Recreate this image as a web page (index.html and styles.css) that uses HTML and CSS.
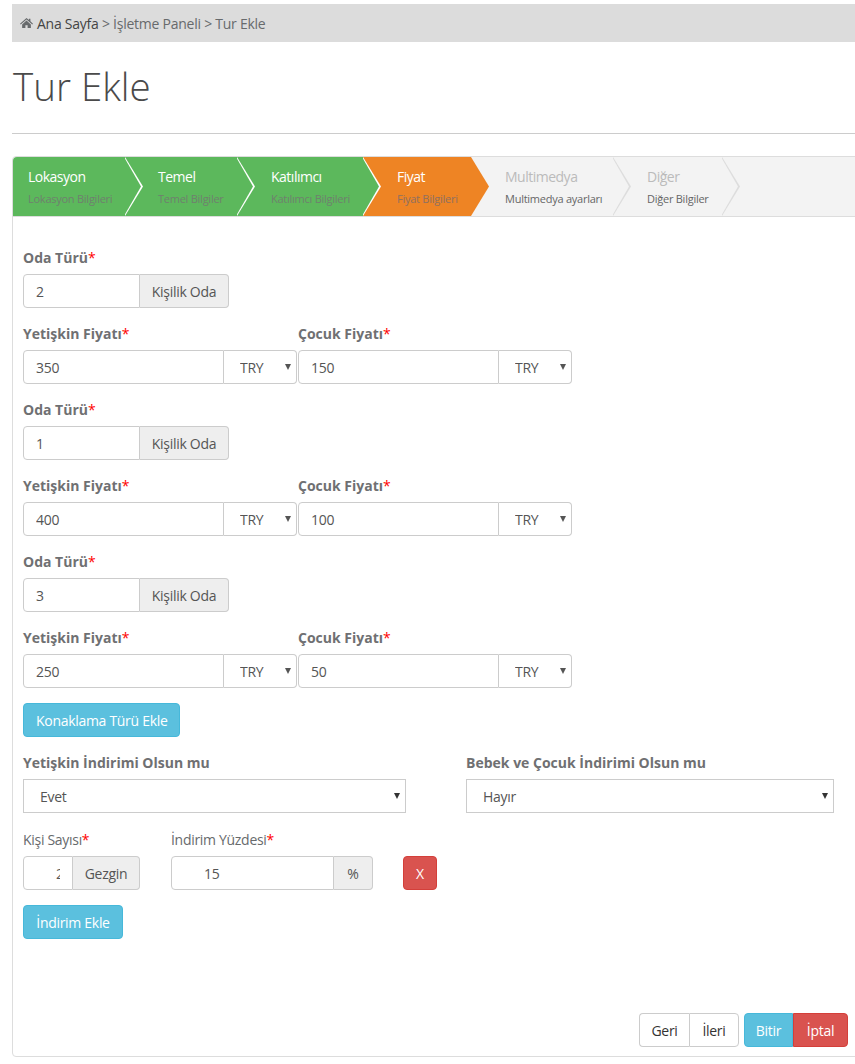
FILE: index.html
```html
<!DOCTYPE html>
<html lang="tr">
<head>
    <meta charset="UTF-8">
    <title>Tur Ekle</title>
    <link rel="stylesheet" href="styles.css">
</head>
<body>
    <div class="breadcrumb">
        <svg class="home-icon" viewBox="0 0 14 12" width="13" height="12"><path d="M7 0.5 L9.6 2.8 V1.4 H11.2 V4.2 L14 6.7 L13.2 7.6 L7 2.2 L0.8 7.6 L0 6.7 Z M2.3 7.5 L7 3.4 L11.7 7.5 V11.5 H8.2 V8.4 H5.8 V11.5 H2.3 Z"/></svg>
        <span class="crumb-trail"><a class="crumb-home">Ana Sayfa</a> &gt; İşletme Paneli &gt; Tur Ekle</span>
    </div>

    <h1 class="page-title">Tur Ekle</h1>
    <hr class="title-rule">

    <div class="wizard">
        <ul class="steps">
            <li class="step done first"><b>Lokasyon</b><small>Lokasyon Bilgileri</small></li>
            <li class="step done second"><b>Temel</b><small>Temel Bilgiler</small></li>
            <li class="step done third"><b>Katılımcı</b><small>Katılımcı Bilgileri</small></li>
            <li class="step active fourth"><b>Fiyat</b><small>Fiyat Bilgileri</small></li>
            <li class="step fifth"><b>Multimedya</b><small>Multimedya ayarları</small></li>
            <li class="step sixth"><b>Diğer</b><small>Diğer Bilgiler</small></li>
        </ul>

        <div class="step-body">
            <label class="field-label">Oda Türü<span class="req">*</span></label>
            <div class="input-group room"><input class="form-input" value="2"><span class="addon">Kişilik Oda</span></div>
            <div class="price-row">
                <div class="price-col">
                    <label class="field-label">Yetişkin Fiyatı<span class="req">*</span></label>
                    <div class="input-group price"><input class="form-input" value="350"><div class="cur-wrap"><select class="cur-select"><option>TRY</option></select></div></div>
                </div>
                <div class="price-col">
                    <label class="field-label">Çocuk Fiyatı<span class="req">*</span></label>
                    <div class="input-group price"><input class="form-input" value="150"><div class="cur-wrap"><select class="cur-select"><option>TRY</option></select></div></div>
                </div>
            </div>

            <label class="field-label">Oda Türü<span class="req">*</span></label>
            <div class="input-group room"><input class="form-input" value="1"><span class="addon">Kişilik Oda</span></div>
            <div class="price-row">
                <div class="price-col">
                    <label class="field-label">Yetişkin Fiyatı<span class="req">*</span></label>
                    <div class="input-group price"><input class="form-input" value="400"><div class="cur-wrap"><select class="cur-select"><option>TRY</option></select></div></div>
                </div>
                <div class="price-col">
                    <label class="field-label">Çocuk Fiyatı<span class="req">*</span></label>
                    <div class="input-group price"><input class="form-input" value="100"><div class="cur-wrap"><select class="cur-select"><option>TRY</option></select></div></div>
                </div>
            </div>

            <label class="field-label">Oda Türü<span class="req">*</span></label>
            <div class="input-group room"><input class="form-input" value="3"><span class="addon">Kişilik Oda</span></div>
            <div class="price-row">
                <div class="price-col">
                    <label class="field-label">Yetişkin Fiyatı<span class="req">*</span></label>
                    <div class="input-group price"><input class="form-input" value="250"><div class="cur-wrap"><select class="cur-select"><option>TRY</option></select></div></div>
                </div>
                <div class="price-col">
                    <label class="field-label">Çocuk Fiyatı<span class="req">*</span></label>
                    <div class="input-group price"><input class="form-input" value="50"><div class="cur-wrap"><select class="cur-select"><option>TRY</option></select></div></div>
                </div>
            </div>

            <button class="btn btn-info add-room">Konaklama Türü Ekle</button>

            <div class="discount-row">
                <div class="discount-col">
                    <label class="field-label">Yetişkin İndirimi Olsun mu</label>
                    <div class="wide-wrap"><select class="wide-select"><option>Evet</option></select></div>
                </div>
                <div class="discount-col">
                    <label class="field-label">Bebek ve Çocuk İndirimi Olsun mu</label>
                    <div class="wide-wrap"><select class="wide-select"><option>Hayır</option></select></div>
                </div>
            </div>

            <div class="rate-row">
                <div class="rate-col">
                    <label class="plain-label">Kişi Sayısı<span class="req">*</span></label>
                    <div class="input-group people"><input class="form-input indented" value="2"><span class="addon">Gezgin</span></div>
                </div>
                <div class="rate-col">
                    <label class="plain-label">İndirim Yüzdesi<span class="req">*</span></label>
                    <div class="input-group percent"><input class="form-input indented" value="15"><span class="addon">%</span></div>
                </div>
                <button class="btn btn-danger remove">X</button>
            </div>

            <button class="btn btn-info add-discount">İndirim Ekle</button>

            <div class="wizard-actions">
                <div class="btn-group">
                    <button class="btn btn-default nav-btn">Geri</button>
                    <button class="btn btn-default nav-btn">İleri</button>
                </div>
                <div class="btn-group">
                    <button class="btn btn-info finish">Bitir</button>
                    <button class="btn btn-danger cancel">İptal</button>
                </div>
            </div>
        </div>
    </div>
</body>
</html>
```

FILE: styles.css
```css
* {
    box-sizing: border-box;
}
html, body {
    overflow: hidden;
}
body {
    margin: 0;
    height: 1064px;
    padding: 4px 0 0 12px;
    font-family: "Open Sans", "Noto Sans", sans-serif;
    font-size: 14px;
    letter-spacing: -0.3px;
    color: #676a6c;
    background: #fff;
}
.breadcrumb {
    height: 38px;
    background: #dcdcdc;
    padding: 0 8px;
    display: flex;
    align-items: center;
    letter-spacing: -0.25px;
    color: #676a6c;
}
.home-icon {
    fill: #676a6c;
    margin-right: 4px;
}
.crumb-home {
    color: #444;
}
.page-title {
    margin: 22px 0 0;
    padding-left: 1px;
    height: 44px;
    line-height: 44px;
    font-size: 38.5px;
    font-weight: 300;
    letter-spacing: 0;
    color: #4a4a4a;
}
.title-rule {
    margin: 25px 0 22px;
    border: 0;
    border-top: 1px solid #ccc;
}
.wizard {
    width: 860px;
    height: 901px;
    border: 1px solid #ddd;
    border-radius: 4px;
    display: flex;
    flex-direction: column;
}
.steps {
    list-style: none;
    margin: 0;
    padding: 0;
    height: 60px;
    display: flex;
    background: #f3f3f3;
    border-bottom: 1px solid #ddd;
    border-radius: 4px 4px 0 0;
}
.step {
    position: relative;
    height: 59px;
    padding: 11px 0 0 34px;
    background: #f3f3f3;
    color: #bbb;
    white-space: nowrap;
}
.step.first {
    width: 112px;
    padding-left: 15px;
    border-top-left-radius: 4px;
}
.step.second {
    width: 112px;
    padding-left: 33px;
}
.step.third {
    width: 126px;
}
.step.fourth {
    width: 108px;
}
.step.fifth {
    width: 142px;
}
.step.sixth {
    width: 109px;
}
.step b {
    display: block;
    font-weight: 400;
    font-size: 14px;
    letter-spacing: -0.5px;
    line-height: 17px;
}
.step small {
    display: block;
    margin-top: 6px;
    font-size: 11px;
    letter-spacing: -0.25px;
    line-height: 15px;
    color: #666;
}
.step::before, .step::after {
    content: "";
    position: absolute;
    top: 0;
    height: 59px;
    left: 100%;
    z-index: 1;
    clip-path: polygon(0 0, 100% 50%, 0 100%);
}
.step::before {
    width: 18px;
    background: #ddd;
}
.step::after {
    width: 17px;
    margin-left: -1px;
    background: #f3f3f3;
}
.step.done {
    background: #5cb85c;
    color: #fff;
}
.step.done small {
    color: #6f806e;
}
.step.done::before {
    background: #fff;
}
.step.done::after {
    background: #5cb85c;
}
.step.active {
    background: #ee8424;
    color: #fff;
}
.step.active small {
    color: #8f7060;
}
.step.active::before, .step.active::after {
    background: #ee8424;
}
.step-body {
    flex: 1;
    padding: 32px 10px 9px;
    display: flex;
    flex-direction: column;
    align-items: flex-start;
}
.field-label, .plain-label {
    display: block;
    height: 17px;
    line-height: 17px;
    margin-bottom: 8px;
}
.field-label {
    font-weight: 700;
    letter-spacing: 0;
    color: #6f7072;
}
.req {
    color: #f00;
    font-weight: 400;
}
.input-group {
    display: flex;
    height: 34px;
    margin-bottom: 17px;
}
.form-input {
    min-width: 0;
    height: 34px;
    padding: 0 12px;
    border: 1px solid #ccc;
    font: inherit;
    letter-spacing: inherit;
    color: #555;
    background: #fff;
    border-radius: 4px 0 0 4px;
}
.form-input.indented {
    padding-left: 32px;
}
.addon {
    display: flex;
    align-items: center;
    justify-content: center;
    height: 34px;
    border: 1px solid #ccc;
    border-left: 0;
    background: #eee;
    color: #555;
    border-radius: 0 4px 4px 0;
}
.room .form-input {
    width: 117px;
}
.room .addon {
    width: 89px;
}
.price-row {
    display: flex;
    gap: 1px;
}
.price-col {
    width: 274px;
}
.price .form-input {
    width: 201px;
}
.cur-wrap {
    position: relative;
    width: 73px;
}
.cur-wrap::after, .wide-wrap::after {
    content: "";
    position: absolute;
    top: 14px;
    border-left: 3.5px solid transparent;
    border-right: 3.5px solid transparent;
    border-top: 6px solid #555;
    pointer-events: none;
}
.cur-wrap::after {
    right: 6px;
}
.wide-wrap::after {
    right: 6px;
    border-top-color: #333;
}
.cur-select, .wide-select {
    appearance: none;
    width: 100%;
    height: 34px;
    border: 1px solid #ccc;
    background: #fff;
    font: inherit;
    letter-spacing: inherit;
    color: #555;
}
.cur-select {
    padding: 0 12px 0 16px;
    border-left: 0;
    border-radius: 0 4px 4px 0;
}
.add-room {
    margin-top: -2px;
}
.btn {
    height: 34px;
    padding: 0 12px;
    border: 1px solid transparent;
    border-radius: 4px;
    font: inherit;
    letter-spacing: inherit;
    cursor: pointer;
}
.btn-info {
    background: #5bc0de;
    border-color: #46b8da;
    color: #fff;
}
.btn-danger {
    background: #d9534f;
    border-color: #d43f3a;
    color: #fff;
}
.btn-default {
    background: #fff;
    border-color: #ccc;
    color: #333;
}
.discount-row {
    display: flex;
    gap: 60px;
    margin-top: 17px;
}
.discount-col {
    width: 383px;
}
.discount-col + .discount-col {
    width: 368px;
}
.wide-wrap {
    position: relative;
}
.wide-select {
    padding: 0 16px;
}
.rate-row {
    display: flex;
    align-items: flex-end;
    margin-top: 18px;
}
.rate-row .input-group {
    margin-bottom: 0;
}
.rate-col {
    margin-right: 31px;
}
.people .form-input {
    width: 50px;
}
.people .addon {
    width: 67px;
}
.percent .form-input {
    width: 163px;
}
.percent .addon {
    width: 39px;
}
.remove {
    width: 34px;
    padding: 0;
    margin-left: -1px;
}
.add-discount {
    width: 100px;
    padding: 0;
    margin-top: 15px;
}
.wizard-actions {
    margin-top: auto;
    align-self: flex-end;
    margin-right: 13px;
    display: flex;
    gap: 5px;
}
.btn-group {
    display: flex;
}
.nav-btn {
    width: 50px;
    padding: 0;
    border-radius: 0 4px 4px 0;
}
.nav-btn:first-child {
    border-right: 0;
    border-radius: 4px 0 0 4px;
}
.finish {
    width: 49px;
    padding: 0;
    border-radius: 4px 0 0 4px;
}
.cancel {
    width: 55px;
    padding: 0;
    border-radius: 0 4px 4px 0;
}
```
